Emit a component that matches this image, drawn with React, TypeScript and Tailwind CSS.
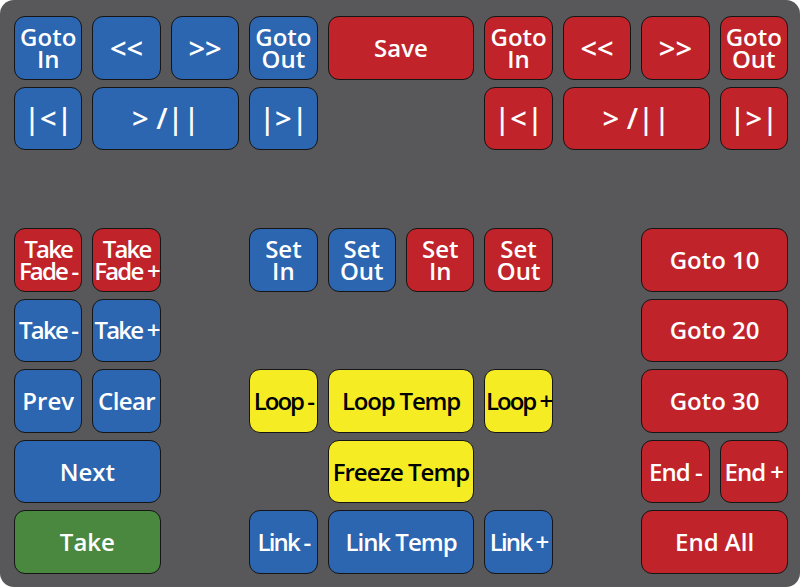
import React from "react";

type Btn = {
  label: React.ReactNode;
  pos: string;
  color: "blue" | "red" | "yellow" | "green";
  extra?: string;
};

const colors = {
  blue: "bg-[#2c65b0] text-white",
  red: "bg-[#c0232a] text-white",
  yellow: "bg-[#f5ec24] text-black",
  green: "bg-[#4a883f] text-white",
};

// transport symbols are drawn a bit larger than the labels
const sym = "text-[29px] font-normal";

const buttons: Btn[] = [
  // top left transport (blue)
  { label: <>Goto<br />In</>, pos: "col-start-1 row-start-1", color: "blue" },
  { label: "<<", pos: "col-start-2 row-start-1", color: "blue", extra: sym },
  { label: ">>", pos: "col-start-3 row-start-1", color: "blue", extra: sym },
  { label: <>Goto<br />Out</>, pos: "col-start-4 row-start-1", color: "blue" },
  { label: "|<|", pos: "col-start-1 row-start-2", color: "blue", extra: sym },
  { label: "> /||", pos: "col-start-2 col-span-2 row-start-2", color: "blue", extra: sym },
  { label: "|>|", pos: "col-start-4 row-start-2", color: "blue", extra: sym },

  { label: "Save", pos: "col-start-5 col-span-2 row-start-1", color: "red" },

  // top right transport (red)
  { label: <>Goto<br />In</>, pos: "col-start-7 row-start-1", color: "red" },
  { label: "<<", pos: "col-start-8 row-start-1", color: "red", extra: sym },
  { label: ">>", pos: "col-start-9 row-start-1", color: "red", extra: sym },
  { label: <>Goto<br />Out</>, pos: "col-start-10 row-start-1", color: "red" },
  { label: "|<|", pos: "col-start-7 row-start-2", color: "red", extra: sym },
  { label: "> /||", pos: "col-start-8 col-span-2 row-start-2", color: "red", extra: sym },
  { label: "|>|", pos: "col-start-10 row-start-2", color: "red", extra: sym },

  // left column
  { label: <>Take<br />Fade -</>, pos: "col-start-1 row-start-4", color: "red", extra: "tracking-[-1.8px]" },
  { label: <>Take<br />Fade +</>, pos: "col-start-2 row-start-4", color: "red", extra: "tracking-[-1.8px]" },
  { label: "Take -", pos: "col-start-1 row-start-5", color: "blue", extra: "tracking-[-1.8px]" },
  { label: "Take +", pos: "col-start-2 row-start-5", color: "blue", extra: "tracking-[-1.8px]" },
  { label: "Prev", pos: "col-start-1 row-start-6", color: "blue" },
  { label: "Clear", pos: "col-start-2 row-start-6", color: "blue", extra: "tracking-[-0.6px]" },
  { label: "Next", pos: "col-start-1 col-span-2 row-start-7", color: "blue" },
  { label: "Take", pos: "col-start-1 col-span-2 row-start-8", color: "green" },

  // set in/out
  { label: <>Set<br />In</>, pos: "col-start-4 row-start-4", color: "blue" },
  { label: <>Set<br />Out</>, pos: "col-start-5 row-start-4", color: "blue" },
  { label: <>Set<br />In</>, pos: "col-start-6 row-start-4", color: "red" },
  { label: <>Set<br />Out</>, pos: "col-start-7 row-start-4", color: "red" },

  // loop / freeze / link
  { label: "Loop -", pos: "col-start-4 row-start-6", color: "yellow", extra: "tracking-[-2px] text-[22px]" },
  { label: "Loop Temp", pos: "col-start-5 col-span-2 row-start-6", color: "yellow", extra: "tracking-[-1.2px]" },
  { label: "Loop +", pos: "col-start-7 row-start-6", color: "yellow", extra: "tracking-[-2px] text-[22px]" },
  { label: "Freeze Temp", pos: "col-start-5 col-span-2 row-start-7", color: "yellow", extra: "tracking-[-1px]" },
  { label: "Link -", pos: "col-start-4 row-start-8", color: "blue", extra: "tracking-[-1.8px] text-[22px]" },
  { label: "Link Temp", pos: "col-start-5 col-span-2 row-start-8", color: "blue", extra: "tracking-[-1px]" },
  { label: "Link +", pos: "col-start-7 row-start-8", color: "blue", extra: "tracking-[-1.8px] text-[22px]" },

  // right column
  { label: "Goto 10", pos: "col-start-9 col-span-2 row-start-4", color: "red" },
  { label: "Goto 20", pos: "col-start-9 col-span-2 row-start-5", color: "red" },
  { label: "Goto 30", pos: "col-start-9 col-span-2 row-start-6", color: "red" },
  { label: "End -", pos: "col-start-9 row-start-7", color: "red", extra: "tracking-[-1px]" },
  { label: "End +", pos: "col-start-10 row-start-7", color: "red", extra: "tracking-[-1px]" },
  { label: "End All", pos: "col-start-9 col-span-2 row-start-8", color: "red" },
];

export default function App() {
  return (
    <div className="w-[800px] h-[587px] bg-white">
      <div
        className="grid h-full grid-cols-10 grid-rows-8 gap-x-[10px] gap-y-[7px] rounded-[14px] bg-[#58585a] pt-[16px] pl-[14px] pr-[12px] pb-[13px]"
        style={{ fontFamily: '"Open Sans", "Noto Sans", sans-serif' }}
      >
        {buttons.map((b, i) => (
          <div
            key={i}
            className={`${b.pos} ${colors[b.color]} flex items-center justify-center rounded-[11px] border border-[#151515] text-center text-[24px] font-semibold leading-[22px] whitespace-nowrap ${b.extra ?? ""}`}
          >
            <span>{b.label}</span>
          </div>
        ))}
      </div>
    </div>
  );
}
